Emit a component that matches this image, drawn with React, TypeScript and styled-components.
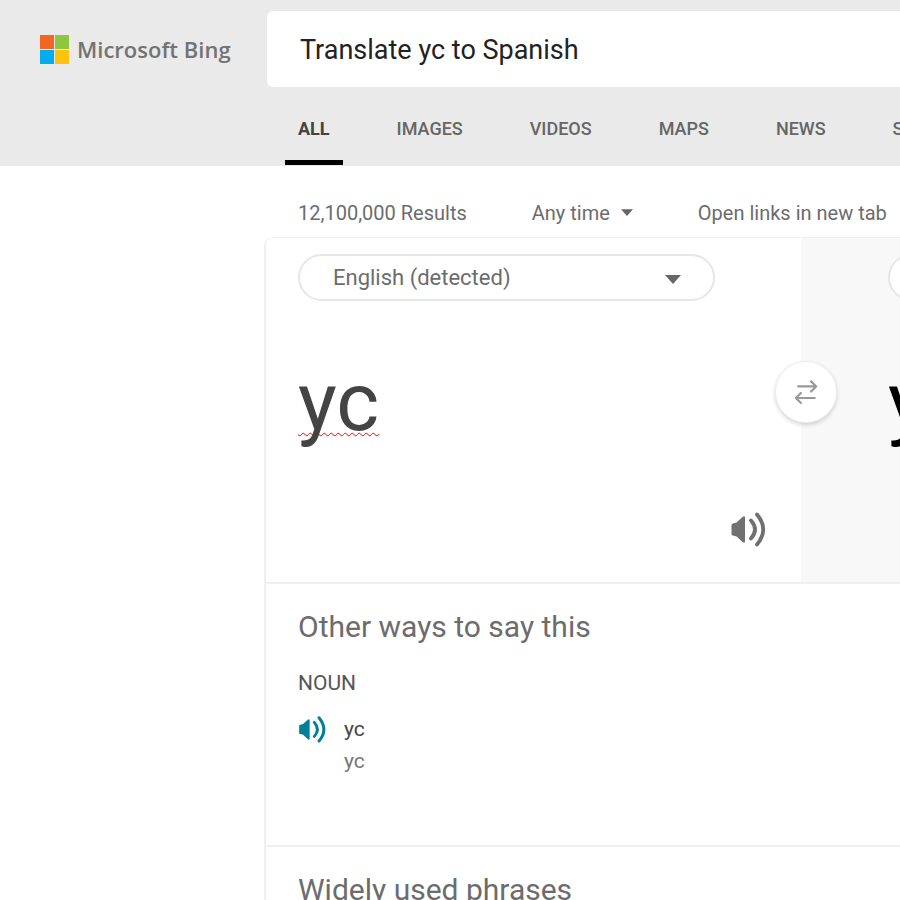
import React, { useState } from "react";
import styled, { createGlobalStyle } from "styled-components";

const GlobalStyle = createGlobalStyle`
  *, *::before, *::after { box-sizing: border-box; }
  html, body { margin: 0; background: #fff; overflow-x: hidden; }
  body { font-family: Roboto, "Liberation Sans", sans-serif; color: #6c6c6c; }
  button, input, select, textarea { font: inherit; color: inherit; margin: 0; }
`;

const Header = styled.header`
  display: grid;
  grid-template-columns: 267px minmax(0, 1fr);
  padding-top: 11px;
  background: #eaeaea;
`;

const Brand = styled.a`
  display: flex;
  align-items: center;
  gap: 7px;
  padding-left: 39px;
  color: #737373;
  text-decoration: none;
`;

const BrandName = styled.span`
  font: 600 22px/30px "Open Sans", "Noto Sans", sans-serif;
  white-space: nowrap;
`;

const SearchBox = styled.input`
  width: 100%;
  height: 76px;
  padding: 2px 33px 0;
  border: 0;
  border-radius: 6px 0 0 6px;
  background: #fff;
  color: #222;
  font-size: 27px;
  outline: none;
`;

const Tabs = styled.nav`
  grid-column: 2;
  display: flex;
  gap: 41px;
  height: 79px;
  padding: 0 0 1px 18px;
  overflow: hidden;
`;

const Tab = styled.a<{ $active?: boolean }>`
  flex: none;
  padding: 30px 13px 0;
  border-bottom: 5px solid ${(p) => (p.$active ? "#000" : "transparent")};
  color: ${(p) => (p.$active ? "#444" : "#666")};
  font-size: 18px;
  font-weight: ${(p) => (p.$active ? 700 : 500)};
  line-height: 24px;
  text-decoration: none;
`;

const Main = styled.main`
  margin-left: 264px;
`;

const Filters = styled.div`
  display: flex;
  align-items: center;
  gap: 65px;
  height: 71px;
  padding: 22px 0 0 34px;
  overflow: hidden;
  font-size: 20px;
  line-height: 28px;
  white-space: nowrap;
`;

const TimeFilter = styled.button`
  display: flex;
  align-items: center;
  gap: 11px;
  padding: 0;
  border: 0;
  background: none;
`;

const LinkOption = styled.label`
  display: flex;
  align-items: center;
  gap: 20px;
`;

const Card = styled.section`
  border: 2px solid #efefef;
  border-width: 1px 0 0 2px;
  border-radius: 9px 0 0 0;
  overflow: hidden;
`;

const Translator = styled.div`
  display: grid;
  grid-template-columns: 535px minmax(0, 1fr);
  height: 346px;
  border-bottom: 2px solid #efefef;
`;

const Pane = styled.div<{ $target?: boolean }>`
  position: relative;
  padding: ${(p) => (p.$target ? "16px 0 0 87px" : "16px 32px 0")};
  background: ${(p) => (p.$target ? "#f8f8f8" : "#fff")};
  overflow: ${(p) => (p.$target ? "hidden" : "visible")};
`;

const LanguagePicker = styled.div`
  display: grid;
  align-items: center;
  width: 417px;
  height: 47px;

  > * { grid-area: 1 / 1; }
  > svg { justify-self: end; margin: 4px 34px 0 0; pointer-events: none; }
`;

const LanguageSelect = styled.select`
  width: 100%;
  height: 100%;
  padding: 0 60px 0 33px;
  border: 2px solid #e6e6e6;
  border-radius: 24px;
  background: #fff;
  appearance: none;
  font-size: 22px;
`;

const SourceText = styled.textarea`
  display: block;
  width: 100%;
  height: 130px;
  margin-top: 51px;
  padding: 0;
  border: 0;
  outline: none;
  resize: none;
  overflow: hidden;
  background: transparent;
  color: #444;
  font-size: 82px;
  line-height: 100px;
  text-decoration: underline wavy #f00 1px;
  text-decoration-skip-ink: none;
  text-underline-offset: 2px;
`;

const TargetText = styled.output`
  display: block;
  margin-top: 51px;
  color: #000;
  font-size: 82px;
  line-height: 100px;
`;

const SwapButton = styled.button`
  position: absolute;
  z-index: 1;
  top: 123px;
  right: -36px;
  display: grid;
  place-items: center;
  width: 62px;
  height: 62px;
  padding: 0;
  border: 1px solid #eee;
  border-radius: 50%;
  background: #fff;
  box-shadow: 0 2px 4px rgba(0, 0, 0, 0.16);
`;

const SpeakButton = styled.button<{ $accent?: boolean }>`
  display: block;
  flex: none;
  padding: ${(p) => (p.$accent ? "2px 0 0" : "0")};
  border: 0;
  background: none;
  color: ${(p) => (p.$accent ? "#007f9b" : "#707070")};

  svg { display: block; }
`;

const PaneFooter = styled.div`
  display: flex;
  justify-content: flex-end;
  padding: 29px 3px 0 0;
`;

const Block = styled.section`
  padding: 23px 32px 0;

  & + & { border-top: 2px solid #efefef; }
  &:not(:last-child) { padding-bottom: 68px; }
`;

const Heading = styled.h2`
  margin: 0;
  font-size: 30px;
  font-weight: 400;
  line-height: 40px;
`;

const WordClass = styled.h3`
  margin: 22px 0 16px;
  color: #555;
  font-size: 21px;
  font-weight: 400;
  line-height: 28px;
`;

const Entry = styled.div`
  display: flex;
  align-items: flex-start;
  gap: 18px;
  font-size: 21px;
  line-height: 32px;
`;

const Word = styled.div`
  color: #444;
`;

const Meaning = styled.div`
  color: #767676;
`;

const Caret = ({ size }: { size: number }) => (
  <svg width={size} height={size / 2 + 1} viewBox="0 0 16 9" aria-hidden="true">
    <path d="M0 0h16L8 9z" fill="#666" />
  </svg>
);

const Speaker = ({ size }: { size: number }) => (
  <svg width={size} height={size} viewBox="0 0 36 36" fill="none" aria-hidden="true">
    <path d="M1.500 14Q1.500 12.500 3 12.500L6.500 11.500 12.500 6Q15 4.500 15 6.500V30.500Q15 32.500 12.500 31L6.500 25.500 3 24.500Q1.500 24.500 1.500 23Z" fill="currentColor" />
    <path d="M21 9.500Q29 18.500 21 27.500M27 3.500Q39.500 18.500 27 33.500" stroke="currentColor" strokeWidth="3.800" strokeLinecap="round" />
  </svg>
);

const tabs = ["ALL", "IMAGES", "VIDEOS", "MAPS", "NEWS", "SHOPPING"];

export default function App() {
  const [query, setQuery] = useState("Translate yc to Spanish");
  const [source, setSource] = useState("yc");

  return (
    <>
      <GlobalStyle />
      <Header>
        <Brand href="#">
          <svg width="31" height="31" viewBox="0 0 31 31" aria-hidden="true">
            <path fill="#f26522" d="M1 1h14v14H1z" />
            <path fill="#8dc63f" d="M16 1h14v14H16z" />
            <path fill="#00aeef" d="M1 16h14v14H1z" />
            <path fill="#ffc20e" d="M16 16h14v14H16z" />
          </svg>
          <BrandName>Microsoft Bing</BrandName>
        </Brand>
        <SearchBox aria-label="Search" value={query} onChange={(e) => setQuery(e.target.value)} />
        <Tabs aria-label="Search categories">
          {tabs.map((name, i) => (
            <Tab key={name} href="#" $active={i === 0}>{name}</Tab>
          ))}
        </Tabs>
      </Header>
      <Main>
        <Filters>
          <span>12,100,000 Results</span>
          <TimeFilter type="button">Any time <Caret size={12} /></TimeFilter>
          <LinkOption>Open links in new tab <input type="checkbox" /></LinkOption>
        </Filters>
        <Card>
          <Translator>
            <Pane>
              <LanguagePicker>
                <LanguageSelect aria-label="Source language">
                  <option>English (detected)</option>
                </LanguageSelect>
                <Caret size={16} />
              </LanguagePicker>
              <SourceText aria-label="Text to translate" spellCheck={false} value={source} onChange={(e) => setSource(e.target.value)} />
              <PaneFooter>
                <SpeakButton type="button" aria-label="Listen"><Speaker size={36} /></SpeakButton>
              </PaneFooter>
              <SwapButton type="button" aria-label="Swap languages">
                <svg width="24" height="26" viewBox="0 0 26 28" fill="none" stroke="#999" strokeWidth="2.400" strokeLinecap="round" strokeLinejoin="round" aria-hidden="true">
                  <path d="M4.500 8H24M18.500 2.500 24 8l-5.500 5.500M22.500 20.500H2M7.500 15 2 20.500 7.500 26" />
                </svg>
              </SwapButton>
            </Pane>
            <Pane $target>
              <LanguagePicker>
                <LanguageSelect aria-label="Target language">
                  <option>Spanish</option>
                </LanguageSelect>
                <Caret size={16} />
              </LanguagePicker>
              <TargetText>yc</TargetText>
            </Pane>
          </Translator>
          <Block>
            <Heading>Other ways to say this</Heading>
            <WordClass>NOUN</WordClass>
            <Entry>
              <SpeakButton type="button" $accent aria-label="Listen to yc"><Speaker size={28} /></SpeakButton>
              <div>
                <Word>yc</Word>
                <Meaning>yc</Meaning>
              </div>
            </Entry>
          </Block>
          <Block>
            <Heading>Widely used phrases</Heading>
          </Block>
        </Card>
      </Main>
    </>
  );
}
